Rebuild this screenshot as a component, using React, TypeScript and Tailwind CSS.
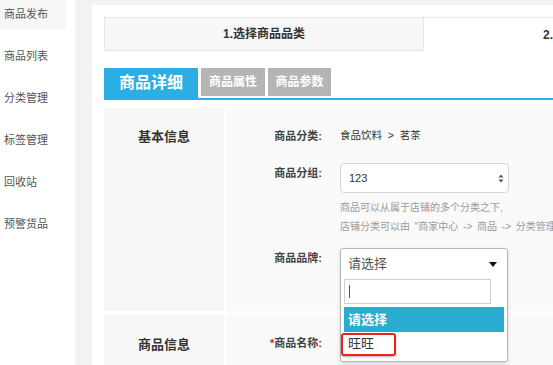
import React from "react";

const font = { fontFamily: '"Liberation Sans", "Noto Sans CJK SC", sans-serif' };

export default function App() {
  const side = ["商品列表", "分类管理", "标签管理", "回收站", "预警货品"];
  return (
    <div className="w-[553px] h-[365px] overflow-hidden flex bg-white" style={font}>
      {/* sidebar */}
      <div className="w-[75px] shrink-0 bg-white">
        <div className="w-[66px] h-[29px] bg-[#f7f7f7] flex items-center pl-[4px] text-[11px] text-[#555]">商品发布</div>
        <div className="mt-[6px]">
          {side.map((s) => (
            <div key={s} className="h-[42px] flex items-center pl-[4px] text-[11px] text-[#555]">{s}</div>
          ))}
        </div>
      </div>
      {/* main */}
      <div className="flex-1 bg-[#f2f2f2] pt-[5px] pl-[17px] min-w-0">
        <div className="bg-white h-full pl-[12px] pt-[12px] overflow-hidden">
          {/* steps */}
          <div className="flex w-[700px]">
            <div className="w-[320px] h-[34px] bg-[#f7f7f7] border border-[#e5e5e5] flex items-center justify-center text-[12px] font-bold text-[#333]">1.选择商品品类</div>
            <div className="w-[320px] h-[34px] bg-white border-t border-[#ececec] flex items-center justify-center text-[12px] font-bold text-[#333]">2.填写商品详情</div>
          </div>
          {/* tabs */}
          <div className="mt-[17px] flex items-start gap-[3px] border-b-2 border-[#2aaee4] h-[32px]">
            <div className="w-[94px] h-[30px] bg-[#2aaee4] text-white text-[16px] font-bold flex items-center justify-center">商品详细</div>
            <div className="w-[64px] h-[28px] bg-[#b5b5b5] text-white text-[12px] font-bold flex items-center justify-center">商品属性</div>
            <div className="w-[63px] h-[28px] bg-[#b5b5b5] text-white text-[12px] font-bold flex items-center justify-center">商品参数</div>
          </div>
          {/* section 1 */}
          <div className="mt-[8px] flex gap-[2px] h-[203px]">
            <div className="w-[120px] shrink-0 bg-[#f7f7f7] pt-[19px] flex justify-center">
              <div className="text-[13px] font-bold text-[#333] leading-[20px] h-[20px]">基本信息</div>
            </div>
            <div className="flex-1 bg-[#fafafa] pt-[18px] relative z-10">
              <div className="flex items-center h-[20px]">
                <div className="w-[96px] text-right text-[11px] font-bold text-[#444]">商品分类:</div>
                <div className="ml-[18px] text-[10.5px] text-[#333] whitespace-nowrap">食品饮料&nbsp;&nbsp;&gt;&nbsp;&nbsp;茗茶</div>
              </div>
              <div className="flex items-start mt-[17px]">
                <div className="w-[96px] text-right text-[11px] font-bold text-[#444] leading-[20px]">商品分组:</div>
                <div className="ml-[18px]">
                  <div className="w-[169px] h-[30px] bg-white border border-[#d5d5d5] rounded-[4px] flex items-center justify-between pl-[8px] pr-[4px] text-[11px] text-[#333]">
                    <span>123</span>
                    <svg width="6" height="9" viewBox="0 0 6 9">
                      <path d="M3 0.5 L5.5 3.5 H0.5 Z" fill="#555" />
                      <path d="M3 8.5 L5.5 5.5 H0.5 Z" fill="#555" />
                    </svg>
                  </div>
                  <div className="mt-[5px] text-[10px] text-[#999] leading-[19px] whitespace-nowrap">
                    <div>商品可以从属于店铺的多个分类之下,</div>
                    <div className="[word-spacing:2px]">店铺分类可以由 "商家中心 -&gt; 商品 -&gt; 分类管理" 中自定义</div>
                  </div>
                </div>
              </div>
              <div className="flex items-start mt-[12px]">
                <div className="w-[96px] text-right text-[11px] font-bold text-[#444] leading-[20px]">商品品牌:</div>
                <div className="ml-[18px] relative w-[168px] h-[30px]">
                  <div className="absolute left-0 top-0 w-[168px] h-[114px] bg-white border border-[#b8b8b8] rounded-[3px] shadow-[0_2px_4px_rgba(0,0,0,0.15)]">
                    <div className="h-[30px] flex items-center justify-between pl-[7px] pr-[10px] text-[13px] text-[#555]">
                      <span>请选择</span>
                      <svg width="8" height="5" viewBox="0 0 8 5"><path d="M0 0 H8 L4 5 Z" fill="#111" /></svg>
                    </div>
                    <div className="ml-[3px] w-[147px] h-[25px] border border-[#cfcfcf] flex items-center pl-[4px]">
                      <div className="w-px h-[13px] bg-[#555]" />
                    </div>
                    <div className="mt-[3px] ml-[3px] w-[160px] h-[25px] bg-[#2aabd0] text-white text-[13px] font-bold flex items-center pl-[4px]">请选择</div>
                    <div className="relative ml-[3px] h-[24px] flex items-center pl-[4px] text-[13px] text-[#333]">
                      旺旺
                      <div className="absolute left-[-3px] top-[1px] w-[55px] h-[23px] border-2 border-[#e8261d] rounded-[3px] shadow-[0_1px_2px_rgba(0,0,0,0.3)]" />
                    </div>
                  </div>
                </div>
              </div>
            </div>
          </div>
          {/* section 2 */}
          <div className="mt-[4px] flex gap-[2px] h-[60px]">
            <div className="w-[120px] shrink-0 bg-[#f7f7f7] pt-[20px] flex justify-center">
              <div className="text-[13px] font-bold text-[#333] leading-[20px] h-[20px]">商品信息</div>
            </div>
            <div className="flex-1 bg-[#fafafa] pt-[18px]">
              <div className="flex items-center h-[20px]">
                <div className="w-[96px] text-right text-[11px] font-bold text-[#444]"><span className="text-[#e8261d]">*</span>商品名称:</div>
              </div>
            </div>
          </div>
        </div>
      </div>
    </div>
  );
}
